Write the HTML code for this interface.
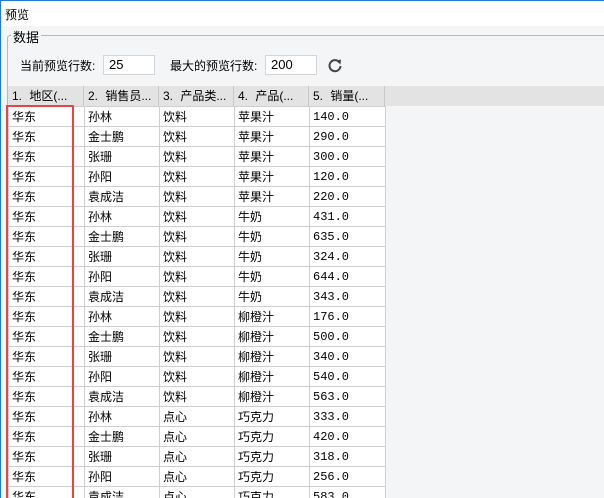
<!DOCTYPE html>
<html><head><meta charset="utf-8"><style>
*{margin:0;padding:0;box-sizing:border-box}
html{width:604px;height:498px;overflow:hidden}
body{width:604px;height:498px;overflow:hidden;background:#f4f5f6;font-family:"Liberation Sans","Noto Sans CJK SC",sans-serif;font-size:12px;color:#000;position:relative}
.a{position:absolute}
.title{left:0;top:0;width:604px;height:26px;background:#fff;border-top:1px solid #1e7ad6;border-left:1px solid #1e7ad6}
.fs{left:7px;top:35px;width:610px;height:470px;border:1px solid #b8b8b8;border-radius:3px}
.inp{background:#fff;border:1px solid #d4d4d4;height:20px;padding-left:5px;line-height:18px;font-size:13px}
.hdr{left:8px;top:86px;width:596px;height:20px;background:#e3e3e3}
.hc{position:absolute;top:0;height:20px;line-height:20px;padding-left:4px;border-right:1px solid #c8c8c8;white-space:nowrap;overflow:hidden;word-spacing:4px}
table{position:absolute;left:8px;top:106px;border-collapse:collapse;background:#fff}
td{border:1px solid #cfcfcf;height:20px;padding:0 0 0 3px;white-space:nowrap;font-size:12px}
.n{font-family:"Liberation Mono","Noto Sans CJK SC",monospace;font-size:12px}
.red{left:6px;top:105px;width:68px;height:393px;border:2px solid #e84444;border-bottom:none}
</style></head><body>
<div class="a" style="left:0;top:0;width:1px;height:498px;background:#1e7ad6"></div>
<div class="a title"><span class="a" style="left:4px;top:5px;font-size:12px">预览</span></div>
<div class="a fs"></div>
<div class="a" style="left:11px;top:27px;background:#f4f5f6;padding:0 2px;font-size:13px">数据</div>
<div class="a" style="left:20px;top:57px;font-size:12px">当前预览行数:</div>
<div class="a inp" style="left:103px;top:55px;width:52px">25</div>
<div class="a" style="left:170px;top:57px;font-size:12px">最大的预览行数:</div>
<div class="a inp" style="left:265px;top:55px;width:52px">200</div>
<svg class="a" style="left:327px;top:56px" width="16" height="18" viewBox="0 0 16 18"><path d="M12.5 6.5A5.5 5.5 0 1 0 13.5 10" fill="none" stroke="#444" stroke-width="2"/><path d="M9 4.5L14 3.5L13.5 8.5Z" fill="#444"/></svg>
<div class="a hdr">
<div class="hc" style="left:0;width:76px">1. 地区(...</div>
<div class="hc" style="left:76px;width:75px">2. 销售员...</div>
<div class="hc" style="left:151px;width:75px">3. 产品类...</div>
<div class="hc" style="left:226px;width:75px">4. 产品(...</div>
<div class="hc" style="left:301px;width:76px">5. 销量(...</div>
</div>
<table><colgroup><col style="width:76px"><col style="width:75px"><col style="width:75px"><col style="width:75px"><col style="width:76px"></colgroup>
<tbody>
<tr><td>华东</td><td>孙林</td><td>饮料</td><td>苹果汁</td><td class="n">140.0</td></tr>
<tr><td>华东</td><td>金士鹏</td><td>饮料</td><td>苹果汁</td><td class="n">290.0</td></tr>
<tr><td>华东</td><td>张珊</td><td>饮料</td><td>苹果汁</td><td class="n">300.0</td></tr>
<tr><td>华东</td><td>孙阳</td><td>饮料</td><td>苹果汁</td><td class="n">120.0</td></tr>
<tr><td>华东</td><td>袁成洁</td><td>饮料</td><td>苹果汁</td><td class="n">220.0</td></tr>
<tr><td>华东</td><td>孙林</td><td>饮料</td><td>牛奶</td><td class="n">431.0</td></tr>
<tr><td>华东</td><td>金士鹏</td><td>饮料</td><td>牛奶</td><td class="n">635.0</td></tr>
<tr><td>华东</td><td>张珊</td><td>饮料</td><td>牛奶</td><td class="n">324.0</td></tr>
<tr><td>华东</td><td>孙阳</td><td>饮料</td><td>牛奶</td><td class="n">644.0</td></tr>
<tr><td>华东</td><td>袁成洁</td><td>饮料</td><td>牛奶</td><td class="n">343.0</td></tr>
<tr><td>华东</td><td>孙林</td><td>饮料</td><td>柳橙汁</td><td class="n">176.0</td></tr>
<tr><td>华东</td><td>金士鹏</td><td>饮料</td><td>柳橙汁</td><td class="n">500.0</td></tr>
<tr><td>华东</td><td>张珊</td><td>饮料</td><td>柳橙汁</td><td class="n">340.0</td></tr>
<tr><td>华东</td><td>孙阳</td><td>饮料</td><td>柳橙汁</td><td class="n">540.0</td></tr>
<tr><td>华东</td><td>袁成洁</td><td>饮料</td><td>柳橙汁</td><td class="n">563.0</td></tr>
<tr><td>华东</td><td>孙林</td><td>点心</td><td>巧克力</td><td class="n">333.0</td></tr>
<tr><td>华东</td><td>金士鹏</td><td>点心</td><td>巧克力</td><td class="n">420.0</td></tr>
<tr><td>华东</td><td>张珊</td><td>点心</td><td>巧克力</td><td class="n">318.0</td></tr>
<tr><td>华东</td><td>孙阳</td><td>点心</td><td>巧克力</td><td class="n">256.0</td></tr>
<tr><td>华东</td><td>袁成洁</td><td>点心</td><td>巧克力</td><td class="n">583.0</td></tr>
</tbody></table>
<div class="a red"></div>
</body></html>
